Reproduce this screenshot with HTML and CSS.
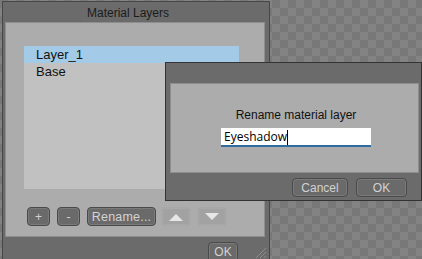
FILE: index.html
```html
<!DOCTYPE html>
<html lang="en">
<head>
    <meta charset="UTF-8">
    <meta name="viewport" content="width=device-width, initial-scale=1.0">
    <title>Material Layers</title>
    <link rel="stylesheet" href="styles.css">
</head>
<body>
    <div class="desktop">
        <section class="window layers-window">
            <header class="window-title">Material Layers</header>
            <div class="panel layers-panel">
                <ul class="layer-list">
                    <li class="selected">Layer_1</li>
                    <li>Base</li>
                </ul>
                <div class="toolbar">
                    <button class="btn btn-square">+</button>
                    <button class="btn btn-square">-</button>
                    <button class="btn btn-rename">Rename...</button>
                    <button class="btn btn-arrow" disabled>
                        <svg width="16" height="8" viewBox="0 0 16 8"><path d="M1 8 L8 1 L15 8 Z" fill="#e6e6e6"/></svg>
                    </button>
                    <button class="btn btn-arrow" disabled>
                        <svg width="16" height="8" viewBox="0 0 16 8"><path d="M1 0 L8 7 L15 0 Z" fill="#e6e6e6"/></svg>
                    </button>
                </div>
            </div>
            <footer class="window-foot">
                <button class="btn btn-ok-main">OK</button>
                <svg class="grip" width="12" height="12" viewBox="0 0 12 12">
                    <path d="M11 1 L1 11 M11 5 L5 11 M11 9 L9 11" stroke="#8c8c8c" stroke-width="1"/>
                </svg>
            </footer>
        </section>

        <section class="window rename-dialog">
            <div class="panel dialog-panel">
                <label class="dialog-label" for="layerName">Rename material layer</label>
                <div class="name-field" id="layerName">Eyeshadow<span class="caret"></span></div>
            </div>
            <div class="dialog-actions">
                <button class="btn btn-cancel">Cancel</button>
                <button class="btn btn-ok">OK</button>
            </div>
        </section>
    </div>
</body>
</html>
```

FILE: styles.css
```css
* {
    margin: 0;
    padding: 0;
    box-sizing: border-box;
    font-family: "Liberation Sans", Arial, sans-serif;
}

body {
    width: 422px;
    height: 259px;
    overflow: hidden;
}

.desktop {
    position: relative;
    width: 422px;
    height: 259px;
    background-color: #7a7a7a;
    background-image: conic-gradient(#838383 25%, #787878 0 50%, #838383 0 75%, #787878 0);
    background-size: 16px 16px;
}

.window {
    position: absolute;
    background: #6b6b6b;
    display: flex;
    flex-direction: column;
}

.layers-window {
    left: 2px;
    top: 1px;
    width: 268px;
    height: 262px;
    border: 1px solid #474747;
    padding: 0 4px 0 2px;
}

.window-title {
    height: 20px;
    line-height: 22px;
    text-align: center;
    padding-right: 14px;
    font-size: 12px;
    color: #1c1c1c;
}

.panel {
    background: #acacac;
    border: 1px solid #8e8e8e;
}

.layers-panel {
    height: 219px;
    padding: 23px 0 0 18px;
}

.layer-list {
    list-style: none;
    width: 215px;
    height: 143px;
    background: #c1c1c1;
}

.layer-list li {
    height: 17px;
    line-height: 17px;
    padding-left: 12px;
    font-size: 13px;
    color: #111;
}

.layer-list li.selected {
    background: #a3cbe8;
}

.toolbar {
    display: flex;
    gap: 7px;
    margin: 18px 0 0 3px;
}

.btn {
    height: 19px;
    background: #6a6a6a;
    border: 1px solid #4a4a4a;
    border-radius: 4px;
    box-shadow: inset 0 0 0 1px #7a7a7a;
    color: #d2d2d2;
    font-size: 12px;
    display: flex;
    align-items: center;
    justify-content: center;
}

.btn-square {
    width: 23px;
}

.btn-rename {
    width: 69px;
    font-size: 12.5px;
    letter-spacing: 0.2px;
}

.btn-arrow {
    width: 30px;
    margin-left: -2px;
    background: #a2a2a2;
    border-color: #a8a8a8;
    box-shadow: inset 0 0 0 1px #a9a9a9;
}

.btn-arrow + .btn-arrow {
    margin-left: -1px;
}

.window-foot {
    position: relative;
    flex: 1;
    padding: 5px 0 0 203px;
}

.btn-ok-main {
    width: 30px;
    height: 20px;
}

.grip {
    position: absolute;
    right: -2px;
    bottom: 3px;
}

.rename-dialog {
    left: 165px;
    top: 62px;
    width: 257px;
    height: 139px;
    border: 1px solid #333;
    padding: 20px 2px 0 4px;
}

.dialog-panel {
    height: 90px;
    display: flex;
    flex-direction: column;
    align-items: center;
    padding: 23px 0 0 3px;
}

.dialog-label {
    font-size: 12px;
    line-height: 16px;
    color: #111;
}

.name-field {
    margin-top: 5px;
    width: 150px;
    height: 19px;
    background: #fff;
    border-bottom: 2px solid #2f6aa0;
    padding: 1px 0 0 3px;
    font-family: "Open Sans", "Noto Sans", sans-serif;
    font-size: 12px;
    line-height: 16px;
    color: #000;
    display: flex;
}

.caret {
    width: 1px;
    height: 15px;
    margin-top: 1px;
    background: #000;
}

.dialog-actions {
    display: flex;
    justify-content: flex-end;
    gap: 8px;
    padding: 5px 12px 0 0;
}

.btn-cancel {
    width: 56px;
    height: 19px;
}

.btn-ok {
    width: 51px;
    height: 19px;
}
```
